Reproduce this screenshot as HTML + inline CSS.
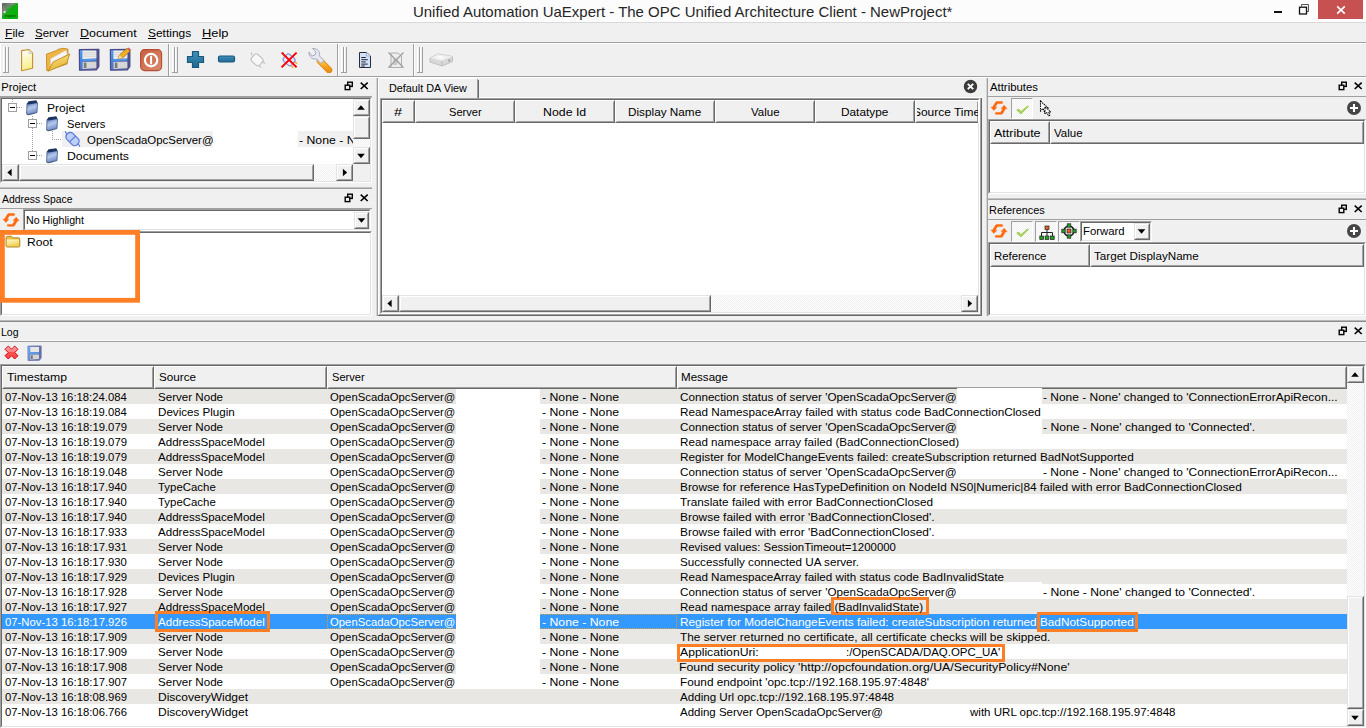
<!DOCTYPE html>
<html lang="en"><head><meta charset="utf-8"><title>UaExpert</title>
<style>
html,body{margin:0;padding:0}
body{width:1366px;height:728px;overflow:hidden;position:relative;background:#f0f0f0;font-family:'Liberation Sans',sans-serif;font-size:11.2px;color:#000}
div,span,svg{position:absolute;box-sizing:border-box}
.t{white-space:pre;line-height:16px;height:16px;transform-origin:0 50%}
.hl{background:#a0a0a0;height:1px}
.hw{background:#fff;height:1px}
.vl{background:#a0a0a0;width:1px}
.vw{background:#fff;width:1px}
.sunk{border:1px solid;border-color:#a0a0a0 #fff #fff #a0a0a0;background:#fff}
.sunk>.in{left:0;top:0;right:0;bottom:0;border:1px solid;border-color:#696969 #e3e3e3 #e3e3e3 #696969}
.hdr{background:#f0f0f0;border:1px solid;border-color:#fff #696969 #696969 #fff}
.hdr>i{position:absolute;left:0;top:0;right:0;bottom:0;border:1px solid;border-color:#f0f0f0 #a0a0a0 #a0a0a0 #f0f0f0}
.btn{background:#f0f0f0;border:1px solid;border-color:#e3e3e3 #696969 #696969 #e3e3e3}
.btn>i{position:absolute;left:0;top:0;right:0;bottom:0;border:1px solid;border-color:#fff #a0a0a0 #a0a0a0 #fff}
.chk{background-color:#fff;background-image:linear-gradient(45deg,#f0f0f0 25%,transparent 25%,transparent 75%,#f0f0f0 75%),linear-gradient(45deg,#f0f0f0 25%,transparent 25%,transparent 75%,#f0f0f0 75%);background-size:2px 2px;background-position:0 0,1px 1px}
.alt{background:#e9e7e3}
.wh{background:#fff}
.sel{background:#3399ff}
.ob{border:3px solid #ff7f27}
.grip{width:1px;background:#a0a0a0}
.t i{position:static;font-style:normal}

</style></head>
<body>
<div class="" style="left:0px;top:0px;width:1366px;height:22px;background:#fcfcfc"></div>
<div class="hl" style="left:0px;top:22px;width:1366px;background:#d9d9d9;"></div>
<svg style="left:2px;top:3px" width="16" height="16" viewBox="0 0 16 16"><defs><linearGradient id="gAI" x1="0" y1="0" x2="0.700" y2="0.800"><stop offset="0" stop-color="#5c5c5c"/><stop offset="0.450" stop-color="#8a8a8a"/><stop offset="0.620" stop-color="#12ad12"/><stop offset="1" stop-color="#0cb00c"/></linearGradient></defs><rect width="16" height="16" rx=".8" fill="url(#gAI)"/><text x="3.300" y="7" font-family="Liberation Sans,sans-serif" font-weight="bold" font-size="6.500" fill="#14a514">UA</text><text x="3" y="13.600" font-family="Liberation Sans,sans-serif" font-weight="bold" font-size="3.600" fill="#0a5a0a">expert</text><circle cx="2.600" cy="9" r="1.100" fill="#e8ffe8" opacity=".9"/></svg>
<div class="" style="left:1318px;top:0px;width:45px;height:19px;background:#c75050"></div>
<svg style="left:1336px;top:5px" width="10" height="10" viewBox="0 0 10 10"><path d="M1.200 1.300 L8.800 8.700 M8.800 1.300 L1.200 8.700" stroke="#fff" stroke-width="1.700" fill="none"/></svg>
<svg style="left:1298px;top:3px" width="12" height="12" viewBox="0 0 12 12"><path d="M3.5 3.5 V1.5 H10.5 V8.5 H8.5" stroke="#555" stroke-width="1" fill="none"/><rect x="1.5" y="4.200" width="7" height="6.800" stroke="#111" stroke-width="1.300" fill="none"/></svg>
<div class="" style="left:1274px;top:10.5px;width:8px;height:2.5px;background:#111"></div>
<div class="hl" style="left:0px;top:42px;width:1366px;"></div>
<div class="hw" style="left:0px;top:43px;width:1366px;"></div>
<div class="hl" style="left:0px;top:76px;width:1366px;"></div>
<div class="hw" style="left:0px;top:77px;width:1366px;"></div>
<div class="vw" style="left:0px;top:44px;height:32px;"></div>
<div class="vw" style="left:3px;top:47px;height:26px;"></div>
<div class="vl" style="left:5px;top:47px;height:26px;"></div>
<div class="hl" style="left:3px;top:72px;width:3px;"></div>
<div class="vw" style="left:6px;top:47px;height:26px;"></div>
<div class="vl" style="left:8px;top:47px;height:26px;"></div>
<div class="hl" style="left:6px;top:72px;width:3px;"></div>
<div class="vw" style="left:172px;top:47px;height:26px;"></div>
<div class="vl" style="left:174px;top:47px;height:26px;"></div>
<div class="hl" style="left:172px;top:72px;width:3px;"></div>
<div class="vw" style="left:175px;top:47px;height:26px;"></div>
<div class="vl" style="left:177px;top:47px;height:26px;"></div>
<div class="hl" style="left:175px;top:72px;width:3px;"></div>
<div class="vw" style="left:341px;top:47px;height:26px;"></div>
<div class="vl" style="left:343px;top:47px;height:26px;"></div>
<div class="hl" style="left:341px;top:72px;width:3px;"></div>
<div class="vw" style="left:344px;top:47px;height:26px;"></div>
<div class="vl" style="left:346px;top:47px;height:26px;"></div>
<div class="hl" style="left:344px;top:72px;width:3px;"></div>
<div class="vw" style="left:417px;top:47px;height:26px;"></div>
<div class="vl" style="left:419px;top:47px;height:26px;"></div>
<div class="hl" style="left:417px;top:72px;width:3px;"></div>
<div class="vw" style="left:420px;top:47px;height:26px;"></div>
<div class="vl" style="left:422px;top:47px;height:26px;"></div>
<div class="hl" style="left:420px;top:72px;width:3px;"></div>
<div class="vl" style="left:167.5px;top:44px;height:32px;"></div>
<div class="vw" style="left:168.5px;top:44px;height:32px;"></div>
<div class="vl" style="left:336.6px;top:44px;height:32px;"></div>
<div class="vw" style="left:337.6px;top:44px;height:32px;"></div>
<div class="vl" style="left:412.6px;top:44px;height:32px;"></div>
<div class="vw" style="left:413.6px;top:44px;height:32px;"></div>
<svg style="left:0;top:0" width="0" height="0"><defs><linearGradient id="gY" x1="0" y1="0" x2="0.300" y2="1"><stop offset="0" stop-color="#ffffff"/><stop offset="1" stop-color="#f8ef8c"/></linearGradient><linearGradient id="gF" x1="0" y1="0" x2="0.300" y2="1"><stop offset="0" stop-color="#f9e27a"/><stop offset="1" stop-color="#e6b63c"/></linearGradient><linearGradient id="gB" x1="0" y1="0" x2="1" y2="0.200"><stop offset="0" stop-color="#66b8ff"/><stop offset="0.180" stop-color="#3f8aea"/><stop offset="0.300" stop-color="#5a78c0"/><stop offset="1" stop-color="#50508c"/></linearGradient><linearGradient id="gR" x1="0" y1="0" x2="1" y2="1"><stop offset="0" stop-color="#c9603f"/><stop offset="1" stop-color="#d98a6c"/></linearGradient><linearGradient id="gP" x1="0" y1="0" x2="0" y2="1"><stop offset="0" stop-color="#3f8fb8"/><stop offset="1" stop-color="#1f6a94"/></linearGradient><linearGradient id="gO" x1="0" y1="0" x2="0" y2="1"><stop offset="0" stop-color="#ffc840"/><stop offset="1" stop-color="#f09010"/></linearGradient></defs></svg>
<svg style="left:19px;top:47px" width="17" height="26" viewBox="0 0 17 26"><path d="M2.600 3.600 L9.800 2.500 L13.600 6.200 L13.600 21.200 L2.600 23.700 Z" fill="url(#gY)" stroke="#c4902a" stroke-width="1.100" stroke-linejoin="round"/><path d="M9.800 2.800 L10.200 6.400 L13.400 6.200" fill="#f4f4f0" stroke="#b4b4b4" stroke-width=".7"/></svg>
<svg style="left:45px;top:46px" width="27" height="27" viewBox="0 0 27 27"><path d="M1.400 8.200 L11.200 4.700 L13 3.400 L17.700 2.300 L22.800 3 L23 8 L22 18 L1.800 24.800 Z" fill="#f0b440" stroke="#c48a22" stroke-width=".9" stroke-linejoin="round"/><path d="M5.600 12.700 L21 4.300 L22.300 8.600 L5.600 19.500 Z" fill="#f6f6fa" stroke="#cfcfcf" stroke-width=".6"/><path d="M8.200 15.900 L24.700 8 L21.700 17.300 L3.200 25.200 Z" fill="url(#gF)" stroke="#c08a20" stroke-width=".9" stroke-linejoin="round"/></svg>
<svg style="left:78px;top:48px" width="23" height="24" viewBox="0 0 23 24"><path d="M1.400 1.600 L20.800 1.400 L20.800 18.600 L18.300 21.800 L1.600 22.200 Z" fill="url(#gB)" stroke="#4a4a86" stroke-width="1.300" stroke-linejoin="round"/><path d="M4.400 2.600 L18.400 2.500 L18.400 10.400 L4.400 10.900 Z" fill="#eeeeee"/><path d="M4.400 4.600h14M4.400 6.400h14M4.400 8.200h14" stroke="#c8c8c8" stroke-width=".6"/><path d="M4.400 11.200 L18.400 10.700 L18.400 12.600 L4.400 13.100 Z" fill="#4a9cf4"/><path d="M4.600 13.900 L18.400 13.400 L18.400 20.300 L4.600 21 Z" fill="#d6d6d6"/><rect x="5.800" y="14.600" width="2.600" height="5.400" fill="#7a7a7a"/></svg>
<svg style="left:109px;top:48px" width="23" height="24" viewBox="0 0 23 24"><path d="M1.400 1.600 L20.800 1.400 L20.800 18.600 L18.300 21.800 L1.600 22.200 Z" fill="url(#gB)" stroke="#4a4a86" stroke-width="1.300" stroke-linejoin="round"/><path d="M4.400 2.600 L18.400 2.500 L18.400 10.400 L4.400 10.900 Z" fill="#eeeeee"/><path d="M4.400 4.600h14M4.400 6.400h14M4.400 8.200h14" stroke="#c8c8c8" stroke-width=".6"/><path d="M4.400 11.200 L18.400 10.700 L18.400 12.600 L4.400 13.100 Z" fill="#4a9cf4"/><path d="M4.600 13.900 L18.400 13.400 L18.400 20.300 L4.600 21 Z" fill="#d6d6d6"/><rect x="5.800" y="14.600" width="2.600" height="5.400" fill="#7a7a7a"/></svg>
<svg style="left:116px;top:47px" width="16" height="14" viewBox="0 0 16 14"><path d="M2 12 L3.500 8 L11 1.500 L14 4 L6.500 11 Z" fill="#f0b020" stroke="#a87010" stroke-width=".8"/><path d="M11 1.500 L12.500 0.500 L15 2.800 L14 4 Z" fill="#e85a5a"/><path d="M2 12 L3.500 8 L6.500 11 Z" fill="#f2d9a8"/></svg>
<svg style="left:140px;top:49px" width="23" height="23" viewBox="0 0 23 23"><rect x="0.600" y="0.600" width="21" height="21" rx="4" fill="url(#gR)" stroke="#b44e34" stroke-width="1.100"/><circle cx="11.100" cy="11.100" r="6.200" fill="none" stroke="#fff" stroke-width="2.200"/><rect x="10.100" y="6.800" width="2" height="8.500" fill="#fff"/></svg>
<svg style="left:186px;top:50px" width="19" height="19" viewBox="0 0 19 19"><path d="M6.500 1.500 H12.500 V6.500 H17.500 V12.500 H12.500 V17.500 H6.500 V12.500 H1.500 V6.500 H6.500 Z" fill="url(#gP)" stroke="#1b587c" stroke-width="1.200" stroke-linejoin="round"/></svg>
<svg style="left:217px;top:54px" width="19" height="10" viewBox="0 0 19 10"><rect x="1.500" y="2" width="16" height="6" rx="1.500" fill="url(#gP)" stroke="#1b587c" stroke-width="1.200"/></svg>
<svg style="left:249px;top:52px" width="17" height="17" viewBox="0 0 17 17"><path d="M3.200 3.600 Q2.300 2 2.400 0.300" stroke="#bcbcbc" fill="none" stroke-width="1"/><path d="M12.800 8.800 L15.500 11.300 M9 12.800 L11.700 15.300" stroke="#cacaca" stroke-width="1.500" stroke-linecap="round"/><rect x="3.500" y="2.600" width="9" height="10.600" rx="2.400" transform="rotate(-48 8 7.800)" fill="#f7f7f7" stroke="#bababa" stroke-width="1"/></svg>
<svg style="left:281px;top:52px" width="17" height="17" viewBox="0 0 17 17"><path d="M3.200 3.600 Q2.300 2 2.400 0.300" stroke="#7886d0" fill="none" stroke-width="1"/><path d="M12.800 8.800 L15.500 11.300 M9 12.800 L11.700 15.300" stroke="#ffa820" stroke-width="1.500" stroke-linecap="round"/><rect x="3.500" y="2.600" width="9" height="10.600" rx="2.400" transform="rotate(-48 8 7.800)" fill="#e2e8fe" stroke="#7886d0" stroke-width="1"/><path d="M0.600 0.600 L15.600 15.300 M15.600 0.600 L0.600 15.300" stroke="#ff0000" stroke-width="1.900"/></svg>
<svg style="left:307px;top:47px" width="26" height="26" viewBox="0 0 26 26"><path d="M13 14 L22 23" stroke="#d88010" stroke-width="6.500" stroke-linecap="round"/><path d="M13 14 L22 23" stroke="url(#gO)" stroke-width="5" stroke-linecap="round"/><path d="M2 5 C1.500 9 5 13 9.500 12 L14 16.500 L17 13.500 L12.500 9 C13.500 4.500 10 1 5.500 1.500 L9 5 L8 8 L5 9 Z" fill="#e6e8f2" stroke="#a0a4c0" stroke-width=".9"/></svg>
<svg style="left:358px;top:51px" width="14" height="18" viewBox="0 0 14 18"><path d="M1.500 1.500 H8.500 L12.500 5 V16.500 H1.500 Z" fill="#d3e2fc" stroke="#2a2a3a" stroke-width="1"/><path d="M8.500 1.500 V5 H12.500" fill="#e8f0ff" stroke="#8899bb" stroke-width=".7"/><path d="M3.300 6.500h4.500M3.300 8.700h6.500M3.300 10.900h4.500M3.300 13.100h6.500M3.300 15h3.500" stroke="#111" stroke-width=".9"/></svg>
<svg style="left:387px;top:51px" width="18" height="18" viewBox="0 0 18 18"><path d="M4 2 H11 L14.500 5 V16.500 H4 Z" fill="#ededed" stroke="#b0b0b0"/><path d="M6 9h5M6 11h6M6 13h4" stroke="#a8a8a8"/><path d="M1.500 1.500 L16.500 16.500 M16.500 1.500 L1.500 16.500" stroke="#a0a0a0" stroke-width="1.400"/><path d="M1.500 16.500h15" stroke="#b0b0b0"/></svg>
<svg style="left:429px;top:53px" width="25" height="14" viewBox="0 0 25 14"><path d="M1 5 L9 1 L23.500 3.500 L23.500 8.500 L13 13 L1 9 Z" fill="#d8d8d8" stroke="#c0c0c0"/><path d="M1 5 L9 1 L23.500 3.500 L13 8 Z" fill="#ececec"/><path d="M6 4.500 L10 2.800 L17 4 L12.500 6 Z" fill="#fafafa"/><path d="M13 8 V13" stroke="#bdbdbd"/><rect x="19" y="6.500" width="2.500" height="2" fill="#aaa"/></svg>
<div class="vl" style="left:376px;top:78px;height:238px;background:#d4d4d4;"></div>
<div class="vl" style="left:377px;top:78px;height:238px;"></div>
<div class="vl" style="left:986px;top:78px;height:238px;background:#d4d4d4;"></div>
<div class="vl" style="left:987px;top:78px;height:238px;"></div>
<div class="hl" style="left:0px;top:320px;width:1366px;background:#b8b8b8;"></div>
<div class="hl" style="left:0px;top:321px;width:1366px;background:#8c8c8c;"></div>
<div class="hl" style="left:0px;top:187px;width:372px;background:#c4c4c4;"></div>
<div class="hl" style="left:0px;top:188px;width:372px;"></div>
<div class="hl" style="left:988px;top:198px;width:378px;background:#c4c4c4;"></div>
<div class="hl" style="left:988px;top:199px;width:378px;"></div>
<svg style="left:344.3px;top:80.6px" width="10" height="10" viewBox="0 0 10 10"><rect x="3.700" y="1.200" width="4.600" height="4.200" fill="none" stroke="#000" stroke-width="1.400"/><rect x="1.200" y="4.200" width="4.600" height="4.400" fill="#f0f0f0" stroke="#000" stroke-width="1.400"/></svg>
<svg style="left:360px;top:81.8px" width="9" height="8" viewBox="0 0 9 8"><path d="M0.700 0.700 L7.700 7 M7.700 0.700 L0.700 7" stroke="#000" stroke-width="1.600"/></svg>
<div class="hl" style="left:0.2px;top:96px;width:371.8px;"></div>
<div class="sunk" style="left:0px;top:97px;width:372px;height:86px;"><div class="in"></div></div>
<svg style="left:0;top:0" width="0" height="0"><defs><linearGradient id="gFo" x1="0" y1="0" x2="0.300" y2="1"><stop offset="0" stop-color="#4468ad"/><stop offset=".55" stop-color="#b4c8ec"/><stop offset="1" stop-color="#6f8cc6"/></linearGradient></defs></svg>
<div class="" style="left:62px;top:131px;width:151px;height:16px;background:#f0f0f0"></div>
<div class="" style="left:298px;top:131px;width:55px;height:16px;background:#f0f0f0"></div>
<svg style="left:8px;top:103px" width="9" height="9" viewBox="0 0 9 9"><rect x=".5" y=".5" width="8" height="8" fill="#fff" stroke="#a0a0a0"/><path d="M2 4.500h5" stroke="#000"/></svg>
<div style="left:17px;top:107px;width:6px;height:1px;background-image:linear-gradient(90deg,#a0a0a0 50%,transparent 50%);background-size:2px 1px"></div>
<div style="left:12px;top:99px;width:1px;height:4px;background-image:linear-gradient(180deg,#a0a0a0 50%,transparent 50%);background-size:1px 2px"></div>
<svg style="left:25.3px;top:100px" width="14" height="16" viewBox="0 0 14 16"><path d="M1 14.800 L3.500 15.300 L11 13.500 L3 13 Z" fill="#1a1a1a" opacity=".55"/><path d="M2 3.500 L11 1.800 L12.500 3 L12 12.600 L3.200 14.600 L1.600 13.600 Z" fill="url(#gFo)" stroke="#2a4476" stroke-width=".7"/><path d="M2 3.800 L3.500 1.200 L11.300 0.200 L12.500 3 L3.500 4.600 Z" fill="#1d3563"/></svg>
<svg style="left:28px;top:119px" width="9" height="9" viewBox="0 0 9 9"><rect x=".5" y=".5" width="8" height="8" fill="#fff" stroke="#a0a0a0"/><path d="M2 4.500h5" stroke="#000"/></svg>
<div style="left:37px;top:123px;width:6px;height:1px;background-image:linear-gradient(90deg,#a0a0a0 50%,transparent 50%);background-size:2px 1px"></div>
<div style="left:32px;top:116px;width:1px;height:3px;background-image:linear-gradient(180deg,#a0a0a0 50%,transparent 50%);background-size:1px 2px"></div>
<div style="left:32px;top:128px;width:1px;height:23px;background-image:linear-gradient(180deg,#a0a0a0 50%,transparent 50%);background-size:1px 2px"></div>
<svg style="left:45.3px;top:116px" width="14" height="16" viewBox="0 0 14 16"><path d="M1 14.800 L3.500 15.300 L11 13.500 L3 13 Z" fill="#1a1a1a" opacity=".55"/><path d="M2 3.500 L11 1.800 L12.500 3 L12 12.600 L3.200 14.600 L1.600 13.600 Z" fill="url(#gFo)" stroke="#2a4476" stroke-width=".7"/><path d="M2 3.800 L3.500 1.200 L11.300 0.200 L12.500 3 L3.500 4.600 Z" fill="#1d3563"/></svg>
<div style="left:52px;top:131px;width:1px;height:9px;background-image:linear-gradient(180deg,#a0a0a0 50%,transparent 50%);background-size:1px 2px"></div>
<div style="left:52px;top:139px;width:10px;height:1px;background-image:linear-gradient(90deg,#a0a0a0 50%,transparent 50%);background-size:2px 1px"></div>
<svg style="left:64px;top:131px" width="17" height="16" viewBox="0 0 17 16"><g transform="rotate(45 8.500 8)"><rect x="1.200" y="3.800" width="14.600" height="8.400" rx="3.600" fill="#bccff9" stroke="#5878d8" stroke-width="1.200"/><path d="M8.500 3.800V12.200" stroke="#5878d8" stroke-width="1.100"/></g><path d="M3.200 2.800 C1.800 2.200 1.200 1.200 1.600 0.200 M13.600 13 C15.200 13.600 15.800 14.600 15.600 15.800" stroke="#5878d8" stroke-width="1.100" fill="none"/></svg>
<svg style="left:28px;top:151px" width="9" height="9" viewBox="0 0 9 9"><rect x=".5" y=".5" width="8" height="8" fill="#fff" stroke="#a0a0a0"/><path d="M2 4.500h5" stroke="#000"/></svg>
<div style="left:37px;top:155px;width:6px;height:1px;background-image:linear-gradient(90deg,#a0a0a0 50%,transparent 50%);background-size:2px 1px"></div>
<svg style="left:45.3px;top:148px" width="14" height="16" viewBox="0 0 14 16"><path d="M1 14.800 L3.500 15.300 L11 13.500 L3 13 Z" fill="#1a1a1a" opacity=".55"/><path d="M2 3.500 L11 1.800 L12.500 3 L12 12.600 L3.200 14.600 L1.600 13.600 Z" fill="url(#gFo)" stroke="#2a4476" stroke-width=".7"/><path d="M2 3.800 L3.500 1.200 L11.300 0.200 L12.500 3 L3.500 4.600 Z" fill="#1d3563"/></svg>
<div class="chk" style="left:353px;top:99px;width:17px;height:65px;"></div>
<div class="btn" style="left:353px;top:99px;width:17px;height:17px;"><i></i></div>
<svg style="left:0;top:0" width="1366" height="728" viewBox="0 0 1366 728"><polygon points="357.2,109.65 364.8,109.65 361,105.35" fill="#000"/></svg>
<div class="btn" style="left:353px;top:147px;width:17px;height:17px;"><i></i></div>
<svg style="left:0;top:0" width="1366" height="728" viewBox="0 0 1366 728"><polygon points="357.2,153.85 364.8,153.85 361,158.15" fill="#000"/></svg>
<div class="btn" style="left:353px;top:116px;width:17px;height:23px;"><i></i></div>
<div class="chk" style="left:2px;top:164px;width:351px;height:17px;"></div>
<div class="btn" style="left:2px;top:164px;width:17px;height:17px;"><i></i></div>
<svg style="left:0;top:0" width="1366" height="728" viewBox="0 0 1366 728"><polygon points="11.65,168.7 11.65,176.3 7.35,172.5" fill="#000"/></svg>
<div class="btn" style="left:336px;top:164px;width:17px;height:17px;"><i></i></div>
<svg style="left:0;top:0" width="1366" height="728" viewBox="0 0 1366 728"><polygon points="342.85,168.7 342.85,176.3 347.15,172.5" fill="#000"/></svg>
<div class="btn" style="left:19px;top:164px;width:295px;height:17px;"><i></i></div>
<div class="" style="left:353px;top:164px;width:17px;height:17px;background:#f0f0f0"></div>
<svg style="left:344.3px;top:192.6px" width="10" height="10" viewBox="0 0 10 10"><rect x="3.700" y="1.200" width="4.600" height="4.200" fill="none" stroke="#000" stroke-width="1.400"/><rect x="1.200" y="4.200" width="4.600" height="4.400" fill="#f0f0f0" stroke="#000" stroke-width="1.400"/></svg>
<svg style="left:360px;top:193.8px" width="9" height="8" viewBox="0 0 9 8"><path d="M0.700 0.700 L7.700 7 M7.700 0.700 L0.700 7" stroke="#000" stroke-width="1.600"/></svg>
<div class="hl" style="left:0px;top:208px;width:372px;"></div>
<svg style="left:2px;top:212px" width="18" height="16" viewBox="0 0 18 16"><path d="M12.300 1.600 L6.600 1.600 Q6 1.600 5.700 2.100 L2.600 7.100 L1 7.100 L3.800 10.500 L6.900 7.300 L5.100 7.300 L7.500 3.600 L12.300 3.600 Q13.200 2.600 12.300 1.600 Z M5.600 14.300 L11.600 14.300 Q12.200 14.300 12.500 13.800 L15.500 8.800 L17.100 8.800 L14.200 5.300 L11 8.600 L12.900 8.600 L10.500 12.400 L5.600 12.400 Q4.700 13.400 5.600 14.300 Z" fill="#ff6808" stroke="#ff6808" stroke-width=".450" stroke-linejoin="round"/></svg>
<div class="sunk" style="left:23px;top:209px;width:348px;height:22px;"><div class="in"></div></div>
<div class="btn" style="left:354px;top:212px;width:15px;height:17px;"><i></i></div>
<svg style="left:0;top:0" width="1366" height="728" viewBox="0 0 1366 728"><polygon points="357.7,218.35 365.3,218.35 361.5,222.65" fill="#000"/></svg>
<div class="sunk" style="left:0px;top:231px;width:372px;height:85px;"><div class="in"></div></div>
<svg style="left:0;top:0" width="0" height="0"><defs><linearGradient id="gYF" x1="0" y1="0" x2="0.400" y2="1"><stop offset="0" stop-color="#fffbd0"/><stop offset="1" stop-color="#f0cf50"/></linearGradient></defs></svg>
<svg style="left:5px;top:235px" width="16" height="13" viewBox="0 0 16 13"><path d="M1 3.200 Q1 1.400 2.600 1.200 H6.400 L8 2.800 H13.400 Q14.800 2.800 14.800 4.200 V10.600 Q14.800 12 13.400 12 H2.400 Q1 12 1 10.600 Z" fill="#e9c046" stroke="#a67c1c" stroke-width=".9"/><path d="M1.800 4.600 H14 V10.400 Q14 11.200 13.200 11.200 H2.600 Q1.800 11.200 1.800 10.400 Z" fill="url(#gYF)"/></svg>
<svg style="left:0px;top:229px" width="142" height="75" viewBox="0 0 142 75"><rect x="2.400" y="3.400" width="135.200" height="67.900" fill="none" stroke="#ff7f27" stroke-width="4.800"/></svg>
<div class="hw" style="left:378px;top:97px;width:604px;"></div>
<div class="vw" style="left:378px;top:79px;height:19px;"></div>
<div class="hw" style="left:379px;top:78px;width:98px;"></div>
<div class="vl" style="left:477px;top:79px;height:19px;"></div>
<div class="vl" style="left:478px;top:80px;height:18px;background:#696969;"></div>
<div class="" style="left:379px;top:79px;width:98px;height:19px;background:#f0f0f0"></div>
<svg style="left:963px;top:79px" width="15" height="15" viewBox="0 0 15 15"><circle cx="7.500" cy="7.500" r="6.700" fill="#3c3c3c"/><path d="M4.800 4.800 L10.200 10.200 M10.200 4.800 L4.800 10.200" stroke="#fff" stroke-width="1.900"/></svg>
<div class="vw" style="left:378px;top:98px;height:218px;"></div>
<div class="hl" style="left:379px;top:314px;width:602px;"></div>
<div class="hl" style="left:378px;top:315px;width:604px;background:#696969;"></div>
<div class="vl" style="left:980px;top:98px;height:217px;"></div>
<div class="vl" style="left:981px;top:98px;height:218px;background:#696969;"></div>
<div class="sunk" style="left:380px;top:98px;width:600px;height:216px;"><div class="in"></div></div>
<div class="hdr" style="left:382px;top:100px;width:33px;height:22.5px;"><i></i></div>
<div class="hdr" style="left:415px;top:100px;width:100px;height:22.5px;"><i></i></div>
<div class="hdr" style="left:515px;top:100px;width:100px;height:22.5px;"><i></i></div>
<div class="hdr" style="left:615px;top:100px;width:100px;height:22.5px;"><i></i></div>
<div class="hdr" style="left:715px;top:100px;width:100px;height:22.5px;"><i></i></div>
<div class="hdr" style="left:815px;top:100px;width:100px;height:22.5px;"><i></i></div>
<div class="hdr" style="left:915px;top:100px;width:64px;height:22.5px;"><i></i></div>
<div class="wh" style="left:978px;top:100px;width:1px;height:23px;"></div>
<div class="chk" style="left:382px;top:295px;width:596px;height:17px;"></div>
<div class="btn" style="left:382px;top:295px;width:17px;height:17px;"><i></i></div>
<svg style="left:0;top:0" width="1366" height="728" viewBox="0 0 1366 728"><polygon points="391.65,299.7 391.65,307.3 387.35,303.5" fill="#000"/></svg>
<div class="btn" style="left:961px;top:295px;width:17px;height:17px;"><i></i></div>
<svg style="left:0;top:0" width="1366" height="728" viewBox="0 0 1366 728"><polygon points="967.85,299.7 967.85,307.3 972.15,303.5" fill="#000"/></svg>
<div class="btn" style="left:399px;top:295px;width:312px;height:17px;"><i></i></div>
<svg style="left:1338.3px;top:80.6px" width="10" height="10" viewBox="0 0 10 10"><rect x="3.700" y="1.200" width="4.600" height="4.200" fill="none" stroke="#000" stroke-width="1.400"/><rect x="1.200" y="4.200" width="4.600" height="4.400" fill="#f0f0f0" stroke="#000" stroke-width="1.400"/></svg>
<svg style="left:1354px;top:81.8px" width="9" height="8" viewBox="0 0 9 8"><path d="M0.700 0.700 L7.700 7 M7.700 0.700 L0.700 7" stroke="#000" stroke-width="1.600"/></svg>
<div class="hl" style="left:987.7px;top:96px;width:378.3px;"></div>
<svg style="left:990px;top:100px" width="18" height="16" viewBox="0 0 18 16"><path d="M12.300 1.600 L6.600 1.600 Q6 1.600 5.700 2.100 L2.600 7.100 L1 7.100 L3.800 10.500 L6.900 7.300 L5.100 7.300 L7.500 3.600 L12.300 3.600 Q13.200 2.600 12.300 1.600 Z M5.600 14.300 L11.600 14.300 Q12.200 14.300 12.500 13.800 L15.500 8.800 L17.100 8.800 L14.200 5.300 L11 8.600 L12.900 8.600 L10.500 12.400 L5.600 12.400 Q4.700 13.400 5.600 14.300 Z" fill="#ff6808" stroke="#ff6808" stroke-width=".450" stroke-linejoin="round"/></svg>
<div class="chk" style="left:1011px;top:98px;width:22px;height:21px;border:1px solid;border-color:#a0a0a0 #fff #fff #a0a0a0"></div>
<svg style="left:1014px;top:102px" width="16" height="14" viewBox="0 0 16 14"><path d="M2.600 8 L4.800 7 L6.800 9.400 L13.800 3.800 L14.600 4.600 L7 12 Z" fill="#a6d050" stroke="#8cbc3c" stroke-width=".4"/></svg>
<svg style="left:1038px;top:100px" width="14" height="17" viewBox="0 0 14 17"><path d="M2.500 1 V11 L5 8.500 L7 13 L8.800 12.200 L7 8 H10 Z" fill="#fff" stroke="#000" stroke-width="1.100" stroke-dasharray="1.500 .8"/><path d="M7 7 V14 L9 12.500 L10.500 16 L12 15.300 L10.500 12 H13 Z" fill="#fff" stroke="#000" stroke-width="1" stroke-dasharray="2 .7"/></svg>
<svg style="left:1346.1px;top:99.9px" width="16" height="16" viewBox="0 0 16 16"><circle cx="8" cy="8" r="7" fill="#454545"/><path d="M4 8h8M8 4v8" stroke="#fff" stroke-width="2.100"/></svg>
<div class="sunk" style="left:988px;top:119px;width:378px;height:75px;"><div class="in"></div></div>
<div class="hdr" style="left:990px;top:121px;width:60px;height:22.5px;"><i></i></div>
<div class="hdr" style="left:1050px;top:121px;width:314px;height:22.5px;"><i></i></div>
<svg style="left:1338.3px;top:203.6px" width="10" height="10" viewBox="0 0 10 10"><rect x="3.700" y="1.200" width="4.600" height="4.200" fill="none" stroke="#000" stroke-width="1.400"/><rect x="1.200" y="4.200" width="4.600" height="4.400" fill="#f0f0f0" stroke="#000" stroke-width="1.400"/></svg>
<svg style="left:1354px;top:204.8px" width="9" height="8" viewBox="0 0 9 8"><path d="M0.700 0.700 L7.700 7 M7.700 0.700 L0.700 7" stroke="#000" stroke-width="1.600"/></svg>
<div class="hl" style="left:988px;top:219px;width:378px;"></div>
<svg style="left:990px;top:223.1px" width="18" height="16" viewBox="0 0 18 16"><path d="M12.300 1.600 L6.600 1.600 Q6 1.600 5.700 2.100 L2.600 7.100 L1 7.100 L3.800 10.500 L6.900 7.300 L5.100 7.300 L7.500 3.600 L12.300 3.600 Q13.200 2.600 12.300 1.600 Z M5.600 14.300 L11.600 14.300 Q12.200 14.300 12.500 13.800 L15.500 8.800 L17.100 8.800 L14.200 5.300 L11 8.600 L12.900 8.600 L10.500 12.400 L5.600 12.400 Q4.700 13.400 5.600 14.300 Z" fill="#ff6808" stroke="#ff6808" stroke-width=".450" stroke-linejoin="round"/></svg>
<div class="chk" style="left:1011px;top:221px;width:22px;height:21px;border:1px solid;border-color:#a0a0a0 #fff #fff #a0a0a0"></div>
<svg style="left:1014px;top:225px" width="16" height="14" viewBox="0 0 16 14"><path d="M2.600 8 L4.800 7 L6.800 9.400 L13.800 3.800 L14.600 4.600 L7 12 Z" fill="#a6d050" stroke="#8cbc3c" stroke-width=".4"/></svg>
<div class="chk" style="left:1035px;top:221px;width:22px;height:21px;border:1px solid;border-color:#a0a0a0 #fff #fff #a0a0a0"></div>
<svg style="left:1038.5px;top:224.5px" width="16" height="16" viewBox="0 0 16 16"><path d="M8 4v3.500M2.500 11V7.500h11V11M8 7.500V11" stroke="#222" fill="none"/><rect x="6" y="1" width="4" height="3.500" fill="#e06020" stroke="#222" stroke-width=".7"/><rect x=".8" y="11" width="3.800" height="3.500" fill="#20a020" stroke="#222" stroke-width=".7"/><rect x="6.100" y="11" width="3.800" height="3.500" fill="#20a020" stroke="#222" stroke-width=".7"/><rect x="11.400" y="11" width="3.800" height="3.500" fill="#20a020" stroke="#222" stroke-width=".7"/></svg>
<div class="chk" style="left:1058px;top:221px;width:22px;height:21px;border:1px solid;border-color:#a0a0a0 #fff #fff #a0a0a0"></div>
<svg style="left:1061px;top:223px" width="16" height="16" viewBox="0 0 16 16"><circle cx="8" cy="8" r="5" fill="#fff" stroke="#111" stroke-width="1.500"/><rect x="6" y="6" width="4" height="4" fill="#e06020" stroke="#222" stroke-width=".7"/><rect x="6.200" y=".8" width="3.600" height="3.400" fill="#20a020" stroke="#222" stroke-width=".7"/><rect x="6.200" y="11.800" width="3.600" height="3.400" fill="#20a020" stroke="#222" stroke-width=".7"/><rect x=".8" y="6.200" width="3.400" height="3.600" fill="#20a020" stroke="#222" stroke-width=".7"/><rect x="11.800" y="6.200" width="3.400" height="3.600" fill="#20a020" stroke="#222" stroke-width=".7"/></svg>
<div class="sunk" style="left:1080px;top:221px;width:72px;height:21px;"><div class="in"></div></div>
<div class="btn" style="left:1134px;top:223px;width:16px;height:17px;"><i></i></div>
<svg style="left:0;top:0" width="1366" height="728" viewBox="0 0 1366 728"><polygon points="1137.7,229.35 1145.3,229.35 1141.5,233.65" fill="#000"/></svg>
<svg style="left:1346.1px;top:223px" width="16" height="16" viewBox="0 0 16 16"><circle cx="8" cy="8" r="7" fill="#454545"/><path d="M4 8h8M8 4v8" stroke="#fff" stroke-width="2.100"/></svg>
<div class="sunk" style="left:988px;top:242px;width:378px;height:74px;"><div class="in"></div></div>
<div class="hdr" style="left:990px;top:244px;width:100px;height:22.5px;"><i></i></div>
<div class="hdr" style="left:1090px;top:244px;width:274px;height:22.5px;"><i></i></div>
<svg style="left:1338.3px;top:325.6px" width="10" height="10" viewBox="0 0 10 10"><rect x="3.700" y="1.200" width="4.600" height="4.200" fill="none" stroke="#000" stroke-width="1.400"/><rect x="1.200" y="4.200" width="4.600" height="4.400" fill="#f0f0f0" stroke="#000" stroke-width="1.400"/></svg>
<svg style="left:1354px;top:326.8px" width="9" height="8" viewBox="0 0 9 8"><path d="M0.700 0.700 L7.700 7 M7.700 0.700 L0.700 7" stroke="#000" stroke-width="1.600"/></svg>
<div class="hl" style="left:0px;top:340px;width:1366px;background:#fafafa;"></div>
<div class="hl" style="left:0px;top:341px;width:1366px;"></div>
<svg style="left:0;top:0" width="0" height="0"><defs><linearGradient id="gRX" x1="0" y1="0" x2="0" y2="1"><stop offset="0" stop-color="#ffa0a0"/><stop offset=".45" stop-color="#ff8080"/><stop offset=".5" stop-color="#ff5050"/><stop offset="1" stop-color="#f24444"/></linearGradient><linearGradient id="gB2" x1="0" y1="0" x2="1" y2="0.200"><stop offset="0" stop-color="#86c4ff"/><stop offset="0.200" stop-color="#5a9cec"/><stop offset="0.320" stop-color="#7088c4"/><stop offset="1" stop-color="#5c64a0"/></linearGradient></defs></svg>
<svg style="left:4.3px;top:345.2px" width="15" height="15" viewBox="0 0 15 15"><path d="M1 4.300 L4.300 1 L7.500 4.200 L10.700 1 L14 4.300 L10.800 7.500 L14 10.700 L10.700 14 L7.500 10.800 L4.300 14 L1 10.700 L4.200 7.500 Z" fill="url(#gRX)" stroke="#c8101c" stroke-width="1"/></svg>
<svg style="left:26.7px;top:344.8px" width="16" height="17" viewBox="0 0 16 17"><g transform="scale(0.680 0.700)"><path d="M1.400 1.600 L20.800 1.400 L20.800 18.600 L18.300 21.800 L1.600 22.200 Z" fill="url(#gB2)" stroke="#7680b4" stroke-width="1.400" stroke-linejoin="round"/><path d="M4.800 2.800 L17.800 2.700 L17.800 10 L4.800 10.400 Z" fill="#e6e6e6"/><path d="M4.800 10.800 L17.800 10.400 L17.800 12.800 L4.800 13.200 Z" fill="#5a9cec"/><path d="M5 14 L17.800 13.600 L17.800 20 L5 20.800 Z" fill="#d4d4d4"/><rect x="6" y="14.800" width="2.400" height="5" fill="#6a6a6a"/></g></svg>
<div class="sunk" style="left:0px;top:364px;width:1366px;height:364px;"><div class="in"></div></div>
<div class="wh" style="left:2px;top:366px;width:1362px;height:360px;"></div>
<div class="hdr" style="left:2px;top:366px;width:152px;height:22.5px;"><i></i></div>
<div class="hdr" style="left:154px;top:366px;width:173px;height:22.5px;"><i></i></div>
<div class="hdr" style="left:327px;top:366px;width:350px;height:22.5px;"><i></i></div>
<div class="hdr" style="left:677px;top:366px;width:670px;height:22.5px;"><i></i></div>
<div class="" style="left:1347px;top:366px;width:17px;height:22px;background:#f0f0f0"></div>
<div class="alt" style="left:2px;top:389px;width:1345px;height:15px;"></div>
<div class="wh" style="left:455.7px;top:389px;width:84.3px;height:15px;"></div>
<div class="wh" style="left:957px;top:388px;width:85px;height:16px;"></div>
<div class="alt" style="left:2px;top:419px;width:1345px;height:15px;"></div>
<div class="wh" style="left:455.7px;top:419px;width:84.3px;height:15px;"></div>
<div class="wh" style="left:957px;top:417px;width:85px;height:17px;"></div>
<div class="alt" style="left:2px;top:449px;width:1345px;height:15px;"></div>
<div class="wh" style="left:455.7px;top:449px;width:84.3px;height:15px;"></div>
<div class="wh" style="left:957px;top:461px;width:85px;height:18px;"></div>
<div class="alt" style="left:2px;top:479px;width:1345px;height:15px;"></div>
<div class="wh" style="left:455.7px;top:479px;width:84.3px;height:15px;"></div>
<div class="alt" style="left:2px;top:509px;width:1345px;height:15px;"></div>
<div class="wh" style="left:455.7px;top:509px;width:84.3px;height:15px;"></div>
<div class="alt" style="left:2px;top:539px;width:1345px;height:15px;"></div>
<div class="wh" style="left:455.7px;top:539px;width:84.3px;height:15px;"></div>
<div class="alt" style="left:2px;top:569px;width:1345px;height:15px;"></div>
<div class="wh" style="left:455.7px;top:569px;width:84.3px;height:15px;"></div>
<div class="wh" style="left:957px;top:582px;width:85px;height:17px;"></div>
<div class="alt" style="left:2px;top:599px;width:1345px;height:15px;"></div>
<div class="wh" style="left:455.7px;top:599px;width:84.3px;height:15px;"></div>
<div class="sel" style="left:2px;top:614px;width:1345px;height:15px;"></div>
<div class="" style="left:327px;top:614px;width:350px;height:15px;border:1px dotted #d8a040"></div>
<div class="wh" style="left:455.7px;top:614px;width:84.3px;height:15px;"></div>
<div class="alt" style="left:2px;top:629px;width:1345px;height:15px;"></div>
<div class="wh" style="left:455.7px;top:629px;width:84.3px;height:15px;"></div>
<div class="alt" style="left:2px;top:659px;width:1345px;height:15px;"></div>
<div class="wh" style="left:455.7px;top:659px;width:84.3px;height:15px;"></div>
<div class="alt" style="left:2px;top:689px;width:1345px;height:15px;"></div>
<div class="ob" style="left:155px;top:610.5px;width:115px;height:21.5px;"></div>
<div class="ob" style="left:831px;top:597px;width:97.5px;height:18px;"></div>
<div class="ob" style="left:1036.5px;top:611.5px;width:101px;height:20px;"></div>
<div class="ob" style="left:676.5px;top:643.5px;width:328px;height:18.5px;"></div>
<div class="chk" style="left:1347px;top:366px;width:17px;height:360px;"></div>
<div class="btn" style="left:1347px;top:366px;width:17px;height:17px;"><i></i></div>
<svg style="left:0;top:0" width="1366" height="728" viewBox="0 0 1366 728"><polygon points="1351.2,376.65 1358.8,376.65 1355,372.35" fill="#000"/></svg>
<div class="btn" style="left:1347px;top:709px;width:17px;height:17px;"><i></i></div>
<svg style="left:0;top:0" width="1366" height="728" viewBox="0 0 1366 728"><polygon points="1351.2,715.85 1358.8,715.85 1355,720.15" fill="#000"/></svg>
<div class="btn" style="left:1347px;top:596px;width:17px;height:113px;"><i></i></div>
<span class="t" style="left:412.85px;top:4px;font-size:15px;transform:scaleX(0.9974);color:#262626;">Unified Automation UaExpert - The OPC Unified Architecture Client - NewProject*</span>
<span class="t" style="left:5.20px;top:24.5px;transform:scaleX(1.0834);"><u>F</u>ile</span>
<span class="t" style="left:35.48px;top:24.5px;transform:scaleX(1.0230);"><u>S</u>erver</span>
<span class="t" style="left:80.18px;top:24.5px;transform:scaleX(1.1100);"><u>D</u>ocument</span>
<span class="t" style="left:148.26px;top:24.5px;transform:scaleX(1.0677);"><u>S</u>ettings</span>
<span class="t" style="left:201.74px;top:24.5px;transform:scaleX(1.1514);"><u>H</u>elp</span>
<span class="t" style="left:1.28px;top:79px;">Project</span>
<span class="t" style="left:46.51px;top:100px;transform:scaleX(1.0790);">Project</span>
<span class="t" style="left:66.99px;top:116px;transform:scaleX(0.9965);">Servers</span>
<span class="t" style="left:87.16px;top:131.9px;transform:scaleX(1.0210);">OpenScadaOpcServer@</span>
<div style="left:298px;top:131px;width:55px;height:16px;overflow:hidden"><span class="t" style="left:0.95px;top:0.9px;transform:scaleX(1.0969);">- None - None</span></div>
<span class="t" style="left:66.99px;top:148px;transform:scaleX(1.0946);">Documents</span>
<span class="t" style="left:1.98px;top:191px;transform:scaleX(0.9289);">Address Space</span>
<span class="t" style="left:25.63px;top:212.1px;transform:scaleX(0.9508);">No Highlight</span>
<span class="t" style="left:26.51px;top:234px;transform:scaleX(1.0822);">Root</span>
<span class="t" style="left:388.61px;top:80px;transform:scaleX(0.9655);">Default DA View</span>
<span class="t" style="left:394.44px;top:103.7px;transform:scaleX(1.3050);">#</span>
<span class="t" style="left:448.50px;top:103.7px;transform:scaleX(0.9920);">Server</span>
<span class="t" style="left:543.29px;top:103.7px;transform:scaleX(1.1026);">Node Id</span>
<span class="t" style="left:628.18px;top:103.7px;transform:scaleX(1.0509);">Display Name</span>
<span class="t" style="left:750.95px;top:103.7px;transform:scaleX(1.0275);">Value</span>
<span class="t" style="left:841.13px;top:103.7px;transform:scaleX(1.0562);">Datatype</span>
<div style="left:917px;top:102px;width:61px;height:18px;overflow:hidden"><span class="t" style="left:-3.84px;top:1.7px;transform:scaleX(1.0679);">Source Time</span></div>
<span class="t" style="left:989.68px;top:79px;transform:scaleX(1.0141);">Attributes</span>
<span class="t" style="left:994.18px;top:124.5px;transform:scaleX(1.1178);">Attribute</span>
<span class="t" style="left:1053.95px;top:124.5px;transform:scaleX(1.0275);">Value</span>
<span class="t" style="left:989.10px;top:202px;transform:scaleX(0.9750);">References</span>
<span class="t" style="left:1082.57px;top:223px;transform:scaleX(1.0155);">Forward</span>
<span class="t" style="left:994.07px;top:247.5px;transform:scaleX(1.0158);">Reference</span>
<span class="t" style="left:1094.04px;top:247.5px;transform:scaleX(1.0402);">Target DisplayName</span>
<span class="t" style="left:1.14px;top:323.8px;transform:scaleX(0.9394);">Log</span>
<span class="t" style="left:6.52px;top:369.3px;transform:scaleX(1.0941);">Timestamp</span>
<span class="t" style="left:158.97px;top:369.3px;transform:scaleX(1.0451);">Source</span>
<span class="t" style="left:331.50px;top:369.3px;transform:scaleX(0.9920);">Server</span>
<span class="t" style="left:681.05px;top:369.3px;transform:scaleX(1.0343);">Message</span>
<span class="t" style="left:4.56px;top:388.5px;transform:scaleX(1.0091);">07-Nov-13 16:18:24.084</span>
<span class="t" style="left:157.97px;top:388.5px;transform:scaleX(1.0355);">Server Node</span>
<span class="t" style="left:329.96px;top:388.5px;transform:scaleX(1.0112);">OpenScadaOpcServer@</span>
<span class="t" style="left:542.45px;top:388.5px;transform:scaleX(1.0969);">- None - None</span>
<span class="t" style="left:679.91px;top:388.5px;transform:scaleX(1.0424);">Connection status of server &#x27;OpenScadaOpcServer@</span>
<span class="t" style="left:1043.47px;top:388.5px;transform:scaleX(1.0697);">- None - None&#x27; changed to &#x27;ConnectionErrorApiRecon...</span>
<span class="t" style="left:4.56px;top:403.5px;transform:scaleX(1.0091);">07-Nov-13 16:18:19.084</span>
<span class="t" style="left:157.55px;top:403.5px;transform:scaleX(1.0380);">Devices Plugin</span>
<span class="t" style="left:329.96px;top:403.5px;transform:scaleX(1.0112);">OpenScadaOpcServer@</span>
<span class="t" style="left:542.45px;top:403.5px;transform:scaleX(1.0969);">- None - None</span>
<span class="t" style="left:679.54px;top:403.5px;transform:scaleX(1.0489);">Read NamespaceArray failed with status code BadConnectionClosed</span>
<span class="t" style="left:4.56px;top:418.5px;transform:scaleX(1.0108);">07-Nov-13 16:18:19.079</span>
<span class="t" style="left:157.97px;top:418.5px;transform:scaleX(1.0355);">Server Node</span>
<span class="t" style="left:329.96px;top:418.5px;transform:scaleX(1.0112);">OpenScadaOpcServer@</span>
<span class="t" style="left:542.45px;top:418.5px;transform:scaleX(1.0969);">- None - None</span>
<span class="t" style="left:679.91px;top:418.5px;transform:scaleX(1.0424);">Connection status of server &#x27;OpenScadaOpcServer@</span>
<span class="t" style="left:1043.46px;top:418.5px;transform:scaleX(1.0853);">- None - None&#x27; changed to &#x27;Connected&#x27;.</span>
<span class="t" style="left:4.56px;top:433.5px;transform:scaleX(1.0108);">07-Nov-13 16:18:19.079</span>
<span class="t" style="left:158.48px;top:433.5px;transform:scaleX(1.0345);">AddressSpaceModel</span>
<span class="t" style="left:329.96px;top:433.5px;transform:scaleX(1.0112);">OpenScadaOpcServer@</span>
<span class="t" style="left:542.45px;top:433.5px;transform:scaleX(1.0969);">- None - None</span>
<span class="t" style="left:679.54px;top:433.5px;transform:scaleX(1.0416);">Read namespace array failed (BadConnectionClosed)</span>
<span class="t" style="left:4.56px;top:448.5px;transform:scaleX(1.0108);">07-Nov-13 16:18:19.079</span>
<span class="t" style="left:158.48px;top:448.5px;transform:scaleX(1.0345);">AddressSpaceModel</span>
<span class="t" style="left:329.96px;top:448.5px;transform:scaleX(1.0112);">OpenScadaOpcServer@</span>
<span class="t" style="left:542.45px;top:448.5px;transform:scaleX(1.0969);">- None - None</span>
<span class="t" style="left:679.53px;top:448.5px;transform:scaleX(1.0543);">Register for ModelChangeEvents failed: createSubscription returned BadNotSupported</span>
<span class="t" style="left:4.56px;top:463.5px;transform:scaleX(1.0105);">07-Nov-13 16:18:19.048</span>
<span class="t" style="left:157.97px;top:463.5px;transform:scaleX(1.0355);">Server Node</span>
<span class="t" style="left:329.96px;top:463.5px;transform:scaleX(1.0112);">OpenScadaOpcServer@</span>
<span class="t" style="left:542.45px;top:463.5px;transform:scaleX(1.0969);">- None - None</span>
<span class="t" style="left:679.91px;top:463.5px;transform:scaleX(1.0424);">Connection status of server &#x27;OpenScadaOpcServer@</span>
<span class="t" style="left:1043.47px;top:463.5px;transform:scaleX(1.0697);">- None - None&#x27; changed to &#x27;ConnectionErrorApiRecon...</span>
<span class="t" style="left:4.56px;top:478.5px;transform:scaleX(1.0100);">07-Nov-13 16:18:17.940</span>
<span class="t" style="left:158.24px;top:478.5px;transform:scaleX(1.0207);">TypeCache</span>
<span class="t" style="left:329.96px;top:478.5px;transform:scaleX(1.0112);">OpenScadaOpcServer@</span>
<span class="t" style="left:542.45px;top:478.5px;transform:scaleX(1.0969);">- None - None</span>
<span class="t" style="left:679.53px;top:478.5px;transform:scaleX(1.0573);">Browse for reference HasTypeDefinition on NodeId NS0|Numeric|84 failed with error BadConnectionClosed</span>
<span class="t" style="left:4.56px;top:493.5px;transform:scaleX(1.0100);">07-Nov-13 16:18:17.940</span>
<span class="t" style="left:158.24px;top:493.5px;transform:scaleX(1.0207);">TypeCache</span>
<span class="t" style="left:329.96px;top:493.5px;transform:scaleX(1.0112);">OpenScadaOpcServer@</span>
<span class="t" style="left:542.45px;top:493.5px;transform:scaleX(1.0969);">- None - None</span>
<span class="t" style="left:680.24px;top:493.5px;transform:scaleX(1.0532);">Translate failed with error BadConnectionClosed</span>
<span class="t" style="left:4.56px;top:508.5px;transform:scaleX(1.0100);">07-Nov-13 16:18:17.940</span>
<span class="t" style="left:158.48px;top:508.5px;transform:scaleX(1.0345);">AddressSpaceModel</span>
<span class="t" style="left:329.96px;top:508.5px;transform:scaleX(1.0112);">OpenScadaOpcServer@</span>
<span class="t" style="left:542.45px;top:508.5px;transform:scaleX(1.0969);">- None - None</span>
<span class="t" style="left:679.52px;top:508.5px;transform:scaleX(1.0664);">Browse failed with error &#x27;BadConnectionClosed&#x27;.</span>
<span class="t" style="left:4.56px;top:523.5px;transform:scaleX(1.0105);">07-Nov-13 16:18:17.933</span>
<span class="t" style="left:158.48px;top:523.5px;transform:scaleX(1.0345);">AddressSpaceModel</span>
<span class="t" style="left:329.96px;top:523.5px;transform:scaleX(1.0112);">OpenScadaOpcServer@</span>
<span class="t" style="left:542.45px;top:523.5px;transform:scaleX(1.0969);">- None - None</span>
<span class="t" style="left:679.52px;top:523.5px;transform:scaleX(1.0664);">Browse failed with error &#x27;BadConnectionClosed&#x27;.</span>
<span class="t" style="left:4.56px;top:538.5px;transform:scaleX(1.0110);">07-Nov-13 16:18:17.931</span>
<span class="t" style="left:157.97px;top:538.5px;transform:scaleX(1.0355);">Server Node</span>
<span class="t" style="left:329.96px;top:538.5px;transform:scaleX(1.0112);">OpenScadaOpcServer@</span>
<span class="t" style="left:542.45px;top:538.5px;transform:scaleX(1.0969);">- None - None</span>
<span class="t" style="left:679.56px;top:538.5px;transform:scaleX(1.0185);">Revised values: SessionTimeout=1200000</span>
<span class="t" style="left:4.56px;top:553.5px;transform:scaleX(1.0100);">07-Nov-13 16:18:17.930</span>
<span class="t" style="left:157.97px;top:553.5px;transform:scaleX(1.0355);">Server Node</span>
<span class="t" style="left:329.96px;top:553.5px;transform:scaleX(1.0112);">OpenScadaOpcServer@</span>
<span class="t" style="left:542.45px;top:553.5px;transform:scaleX(1.0969);">- None - None</span>
<span class="t" style="left:679.97px;top:553.5px;transform:scaleX(1.0435);">Successfully connected UA server.</span>
<span class="t" style="left:4.56px;top:568.5px;transform:scaleX(1.0108);">07-Nov-13 16:18:17.929</span>
<span class="t" style="left:157.55px;top:568.5px;transform:scaleX(1.0380);">Devices Plugin</span>
<span class="t" style="left:329.96px;top:568.5px;transform:scaleX(1.0112);">OpenScadaOpcServer@</span>
<span class="t" style="left:542.45px;top:568.5px;transform:scaleX(1.0969);">- None - None</span>
<span class="t" style="left:679.54px;top:568.5px;transform:scaleX(1.0419);">Read NamespaceArray failed with status code BadInvalidState</span>
<span class="t" style="left:4.56px;top:583.5px;transform:scaleX(1.0105);">07-Nov-13 16:18:17.928</span>
<span class="t" style="left:157.97px;top:583.5px;transform:scaleX(1.0355);">Server Node</span>
<span class="t" style="left:329.96px;top:583.5px;transform:scaleX(1.0112);">OpenScadaOpcServer@</span>
<span class="t" style="left:542.45px;top:583.5px;transform:scaleX(1.0969);">- None - None</span>
<span class="t" style="left:679.91px;top:583.5px;transform:scaleX(1.0424);">Connection status of server &#x27;OpenScadaOpcServer@</span>
<span class="t" style="left:1043.46px;top:583.5px;transform:scaleX(1.0853);">- None - None&#x27; changed to &#x27;Connected&#x27;.</span>
<span class="t" style="left:4.56px;top:598.5px;transform:scaleX(1.0111);">07-Nov-13 16:18:17.927</span>
<span class="t" style="left:158.48px;top:598.5px;transform:scaleX(1.0345);">AddressSpaceModel</span>
<span class="t" style="left:329.96px;top:598.5px;transform:scaleX(1.0112);">OpenScadaOpcServer@</span>
<span class="t" style="left:542.45px;top:598.5px;transform:scaleX(1.0969);">- None - None</span>
<span class="t" style="left:679.55px;top:598.5px;transform:scaleX(1.0344);">Read namespace array failed (BadInvalidState)</span>
<span class="t" style="left:4.56px;top:613.5px;transform:scaleX(1.0105);color:#fff;">07-Nov-13 16:18:17.926</span>
<span class="t" style="left:158.48px;top:613.5px;transform:scaleX(1.0345);color:#fff;">AddressSpaceModel</span>
<span class="t" style="left:329.96px;top:613.5px;transform:scaleX(1.0112);color:#fff;">OpenScadaOpcServer@</span>
<span class="t" style="left:542.45px;top:613.5px;transform:scaleX(1.0969);color:#fff;">- None - None</span>
<span class="t" style="left:679.53px;top:613.5px;transform:scaleX(1.0543);color:#fff;">Register for ModelChangeEvents failed: createSubscription returned BadNotSupported</span>
<span class="t" style="left:4.56px;top:628.5px;transform:scaleX(1.0108);">07-Nov-13 16:18:17.909</span>
<span class="t" style="left:157.97px;top:628.5px;transform:scaleX(1.0355);">Server Node</span>
<span class="t" style="left:329.96px;top:628.5px;transform:scaleX(1.0112);">OpenScadaOpcServer@</span>
<span class="t" style="left:542.45px;top:628.5px;transform:scaleX(1.0969);">- None - None</span>
<span class="t" style="left:680.23px;top:628.5px;transform:scaleX(1.0579);">The server returned no certificate, all certificate checks will be skipped.</span>
<span class="t" style="left:4.56px;top:643.5px;transform:scaleX(1.0108);">07-Nov-13 16:18:17.909</span>
<span class="t" style="left:157.97px;top:643.5px;transform:scaleX(1.0355);">Server Node</span>
<span class="t" style="left:329.96px;top:643.5px;transform:scaleX(1.0112);">OpenScadaOpcServer@</span>
<span class="t" style="left:542.45px;top:643.5px;transform:scaleX(1.0969);">- None - None</span>
<span class="t" style="left:680.48px;top:643.5px;transform:scaleX(1.0901);">ApplicationUri:</span>
<span class="t" style="left:845.95px;top:643.5px;transform:scaleX(1.0225);">:/OpenSCADA/DAQ.OPC_UA&#x27;</span>
<span class="t" style="left:4.56px;top:658.5px;transform:scaleX(1.0105);">07-Nov-13 16:18:17.908</span>
<span class="t" style="left:157.97px;top:658.5px;transform:scaleX(1.0355);">Server Node</span>
<span class="t" style="left:329.96px;top:658.5px;transform:scaleX(1.0112);">OpenScadaOpcServer@</span>
<span class="t" style="left:542.45px;top:658.5px;transform:scaleX(1.0969);">- None - None</span>
<span class="t" style="left:679.49px;top:658.5px;transform:scaleX(1.1003);">Found security policy &#x27;http<i>:</i>//opcfoundation.org/UA/SecurityPolicy#None&#x27;</span>
<span class="t" style="left:4.56px;top:673.5px;transform:scaleX(1.0111);">07-Nov-13 16:18:17.907</span>
<span class="t" style="left:157.97px;top:673.5px;transform:scaleX(1.0355);">Server Node</span>
<span class="t" style="left:329.96px;top:673.5px;transform:scaleX(1.0112);">OpenScadaOpcServer@</span>
<span class="t" style="left:542.45px;top:673.5px;transform:scaleX(1.0969);">- None - None</span>
<span class="t" style="left:679.53px;top:673.5px;transform:scaleX(1.0540);">Found endpoint &#x27;opc.tcp://192.168.195.97:4848&#x27;</span>
<span class="t" style="left:4.56px;top:688.5px;transform:scaleX(1.0108);">07-Nov-13 16:18:08.969</span>
<span class="t" style="left:157.51px;top:688.5px;transform:scaleX(1.0731);">DiscoveryWidget</span>
<span class="t" style="left:680.48px;top:688.5px;transform:scaleX(1.0365);">Adding Url opc.tcp://192.168.195.97:4848</span>
<span class="t" style="left:4.56px;top:703.5px;transform:scaleX(1.0105);">07-Nov-13 16:18:06.766</span>
<span class="t" style="left:157.51px;top:703.5px;transform:scaleX(1.0731);">DiscoveryWidget</span>
<span class="t" style="left:680.48px;top:703.5px;transform:scaleX(1.0257);">Adding Server OpenScadaOpcServer@</span>
<span class="t" style="left:970.02px;top:703.5px;transform:scaleX(1.0314);">with URL opc.tcp://192.168.195.97:4848</span>
</body></html>
